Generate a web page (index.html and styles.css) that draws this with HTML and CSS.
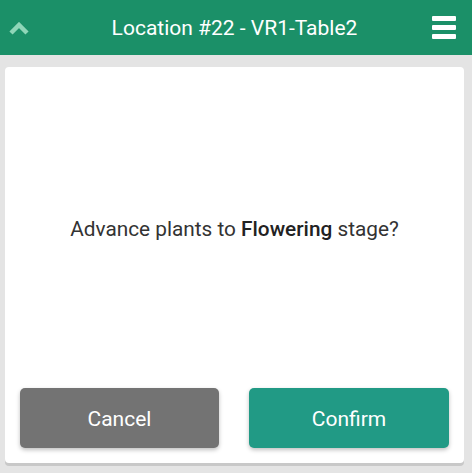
FILE: index.html
```html
<!DOCTYPE html>
<html>
<head>
<meta charset="utf-8">
<link rel="stylesheet" href="styles.css">
</head>
<body>
<header class="topbar">
  <svg class="chev" width="20" height="13" viewBox="0 0 20 13"><path d="M2 11 L10 3 L18 11" fill="none" stroke="#8fd6b8" stroke-width="4.5" stroke-linecap="butt" stroke-linejoin="miter"/></svg>
  <h1 class="title">Location #22 - VR1-Table2</h1>
  <div class="burger"><span></span><span></span><span></span></div>
</header>
<main class="card">
  <div class="msg"><p class="msg-text">Advance plants to <b>Flowering</b> stage?</p></div>
  <div class="actions">
    <button class="btn cancel">Cancel</button>
    <button class="btn confirm">Confirm</button>
  </div>
</main>
</body>
</html>
```
FILE: styles.css
```css
html, body { margin: 0; padding: 0; }
body {
  width: 472px; height: 473px; overflow: hidden;
  background: #e4e4e4;
  font-family: Roboto, "Noto Sans", sans-serif;
}
.topbar {
  height: 55px; background: #1b9068;
  display: flex; align-items: center;
  padding: 0 16px 0 9px; box-sizing: border-box;
}
.chev { display: block; margin-top: 2px; }
.title {
  flex: 1; margin: 0 0 0 8px; text-align: center;
  color: #fff; font-size: 21px; font-weight: 400;
}
.burger { width: 24px; display: flex; flex-direction: column; gap: 4px; }
.burger span { display: block; height: 5px; background: #fff; border-radius: 1px; }
.card {
  margin: 12px 8px 0 5px; height: 396px;
  background: #fff; border-radius: 4px;
  box-shadow: 0 3px 0 #c8c8c8;
  display: flex; flex-direction: column;
}
.msg {
  flex: 1; display: flex; align-items: center; justify-content: center;
  padding-top: 2px;
}
.msg-text { margin: 0; font-size: 20.8px; color: #333; }
.msg-text b { font-weight: 500; color: #222; }
.actions { display: flex; justify-content: space-between; padding: 0 15px 15px 15px; }
.btn {
  width: 200px; height: 60px; border: 0; border-radius: 5px;
  color: #fff; font-family: Roboto, sans-serif; font-size: 21px;
  padding: 2px 0 0 0;
  box-shadow: 0 2px 4px rgba(0,0,0,0.25);
}
.cancel { background: #737373; width: 199px; }
.confirm { background: #219a85; }
```
